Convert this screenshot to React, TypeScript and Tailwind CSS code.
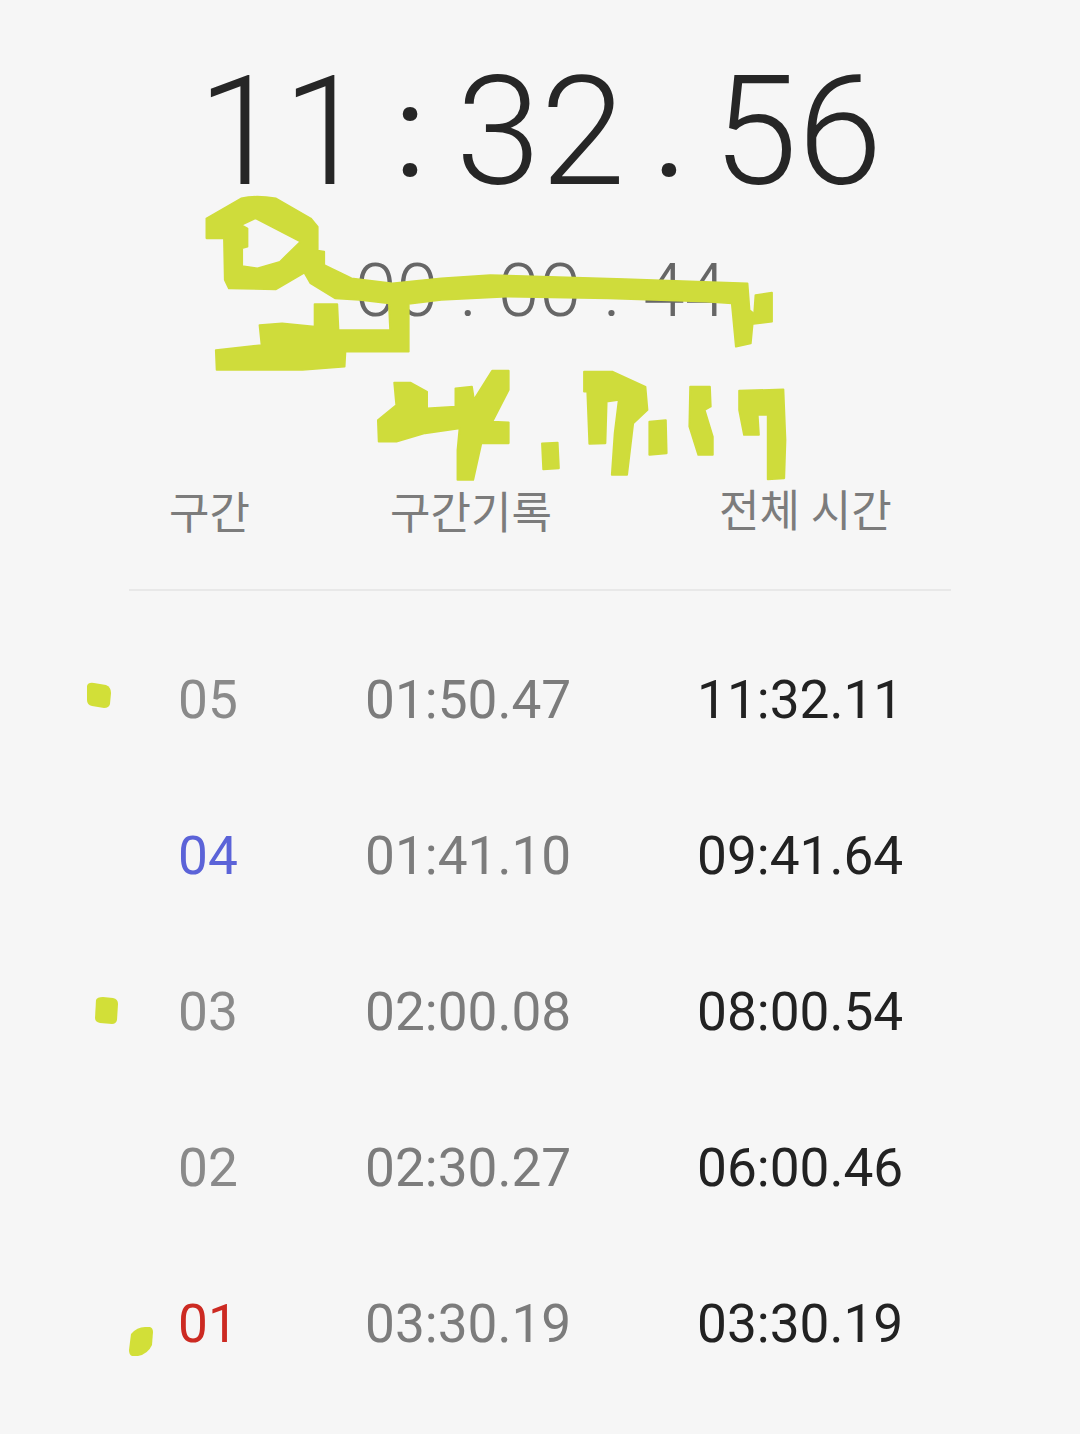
const rows = [
  { n: "05", nc: "text-[#8a8a8a]", a: "01:50.47", b: "11:32.11" },
  { n: "04", nc: "text-[#5b63d8]", a: "01:41.10", b: "09:41.64" },
  { n: "03", nc: "text-[#8a8a8a]", a: "02:00.08", b: "08:00.54" },
  { n: "02", nc: "text-[#8a8a8a]", a: "02:30.27", b: "06:00.46" },
  { n: "01", nc: "text-[#cc2a22]", a: "03:30.19", b: "03:30.19" },
];

function Scribble() {
  return (
    <svg className="absolute left-0 top-0 pointer-events-none" width="1080" height="1434" viewBox="0 0 1080 1434" fill="#cfdc3b">
      <g transform="translate(180 180) scale(0.4082 0.33333)" stroke="#cfdc3b" strokeWidth="5" strokeLinejoin="round">
        <path fillRule="evenodd" d="M65 115 L150 55 Q185 45 235 55 L320 115 L337 140 L337 212 L353 215 L353 255 L420 295 L520 310 L640 295 L760 285 L1090 297 L1390 310 L1395 390 L1405 400 L1398 490 L1362 500 L1352 370 L1290 365 L1050 355 L800 350 L640 360 L560 372 L560 515 L405 515 L403 560 L300 570 L90 570 L88 510 L200 495 L195 435 L250 430 L330 440 L330 372 L385 372 L388 450 L515 450 L512 370 L440 360 L380 355 L320 310 L308 285 L305 278 L235 328 L120 325 L110 300 L108 175 L65 175 Z M185 115 L295 185 L245 245 L190 265 L152 258 L152 205 L165 200 L165 145 L150 135 Z" />
        <path d="M1410 345 L1450 338 L1450 425 L1405 432 Z" />
        <path d="M525 608 L565 608 L605 635 L605 685 L675 680 L675 625 L715 620 L720 660 L765 572 L805 572 L805 630 L765 725 L805 727 L805 790 L738 790 L718 900 L680 900 L680 810 L685 745 L600 760 L530 785 L487 785 L485 720 L530 675 Z" />
        <path d="M887 790 L925 788 L928 865 L890 868 Z" />
        <path d="M990 575 L1060 575 L1140 620 L1145 690 L1110 730 L1095 885 L1058 885 L1065 760 L1075 660 L1045 665 L1042 790 L1003 792 L998 635 L990 635 Z" />
        <path d="M1150 725 L1190 720 L1192 820 L1150 825 Z" />
        <path d="M1250 620 L1298 620 L1300 680 L1285 690 L1305 770 L1305 825 L1270 825 L1248 740 Z" />
        <path d="M1370 632 L1478 628 L1483 780 L1480 895 L1440 898 L1440 800 L1440 705 L1415 705 L1418 765 L1382 765 L1370 690 Z" />
      </g>
      <path fill="#d2df38" d="M87 686 Q88 682 94 683 L106 685 Q111 687 111 693 L110 704 Q109 708 104 708 L92 706 Q87 705 87 700 Z" />
      <path fill="#d2df38" d="M96 1000 Q97 997 103 997 L113 998 Q118 999 118 1004 L117 1020 Q116 1024 112 1024 L100 1023 Q95 1022 95 1018 Z" />
      <path fill="#d2df38" d="M131 1334 Q137 1327 145 1327 L150 1327 Q153 1328 153 1332 L152 1345 Q148 1354 138 1356 L132 1356 Q129 1355 129 1350 Z" />
    </svg>
  );
}

export default function App() {
  return (
    <div className="relative w-[1080px] h-[1434px] overflow-hidden bg-[#f6f6f6] font-['Roboto','Noto_Sans_CJK_KR',sans-serif]">
      <div className="flex justify-center pt-[48px] h-[240px] text-[#262626] text-[153px] leading-[167px] font-light">
        <span>11</span>
        <span className="ml-[27px] mr-[30px] text-[130px] font-normal">:</span>
        <span>32</span>
        <span className="ml-[27px] mr-[26px] text-[130px] font-normal">.</span>
        <span>56</span>
      </div>
      <div className="flex justify-center gap-[22px] pl-[1px] h-[220px] text-[#666666] text-[75px] leading-[100px] font-light">
        <span>00</span><span>:</span><span>00</span><span>.</span><span>44</span>
      </div>
      <div className="mx-[129px] h-[131px] border-b-2 border-[#e8e8e8] grid grid-cols-[160px_340px_1fr] text-[#7c7c7c] text-[44px] leading-[60px]">
        <span className="pl-[40px] pt-[24px]">구간</span>
        <span className="pl-[101px] pt-[24px]">구간기록</span>
        <span className="pl-[90px] pt-[22px]">전체 시간</span>
      </div>
      <div className="pt-[31px]">
        {rows.map((r) => (
          <div key={r.n} className="h-[156px] flex items-center text-[53.2px] leading-[60px]">
            <span className={`w-[365px] pl-[178px] ${r.nc}`}>{r.n}</span>
            <span className="w-[332px] text-[#7c7c7c]">{r.a}</span>
            <span className="text-[#222222]">{r.b}</span>
          </div>
        ))}
      </div>
      <Scribble />
    </div>
  );
}
